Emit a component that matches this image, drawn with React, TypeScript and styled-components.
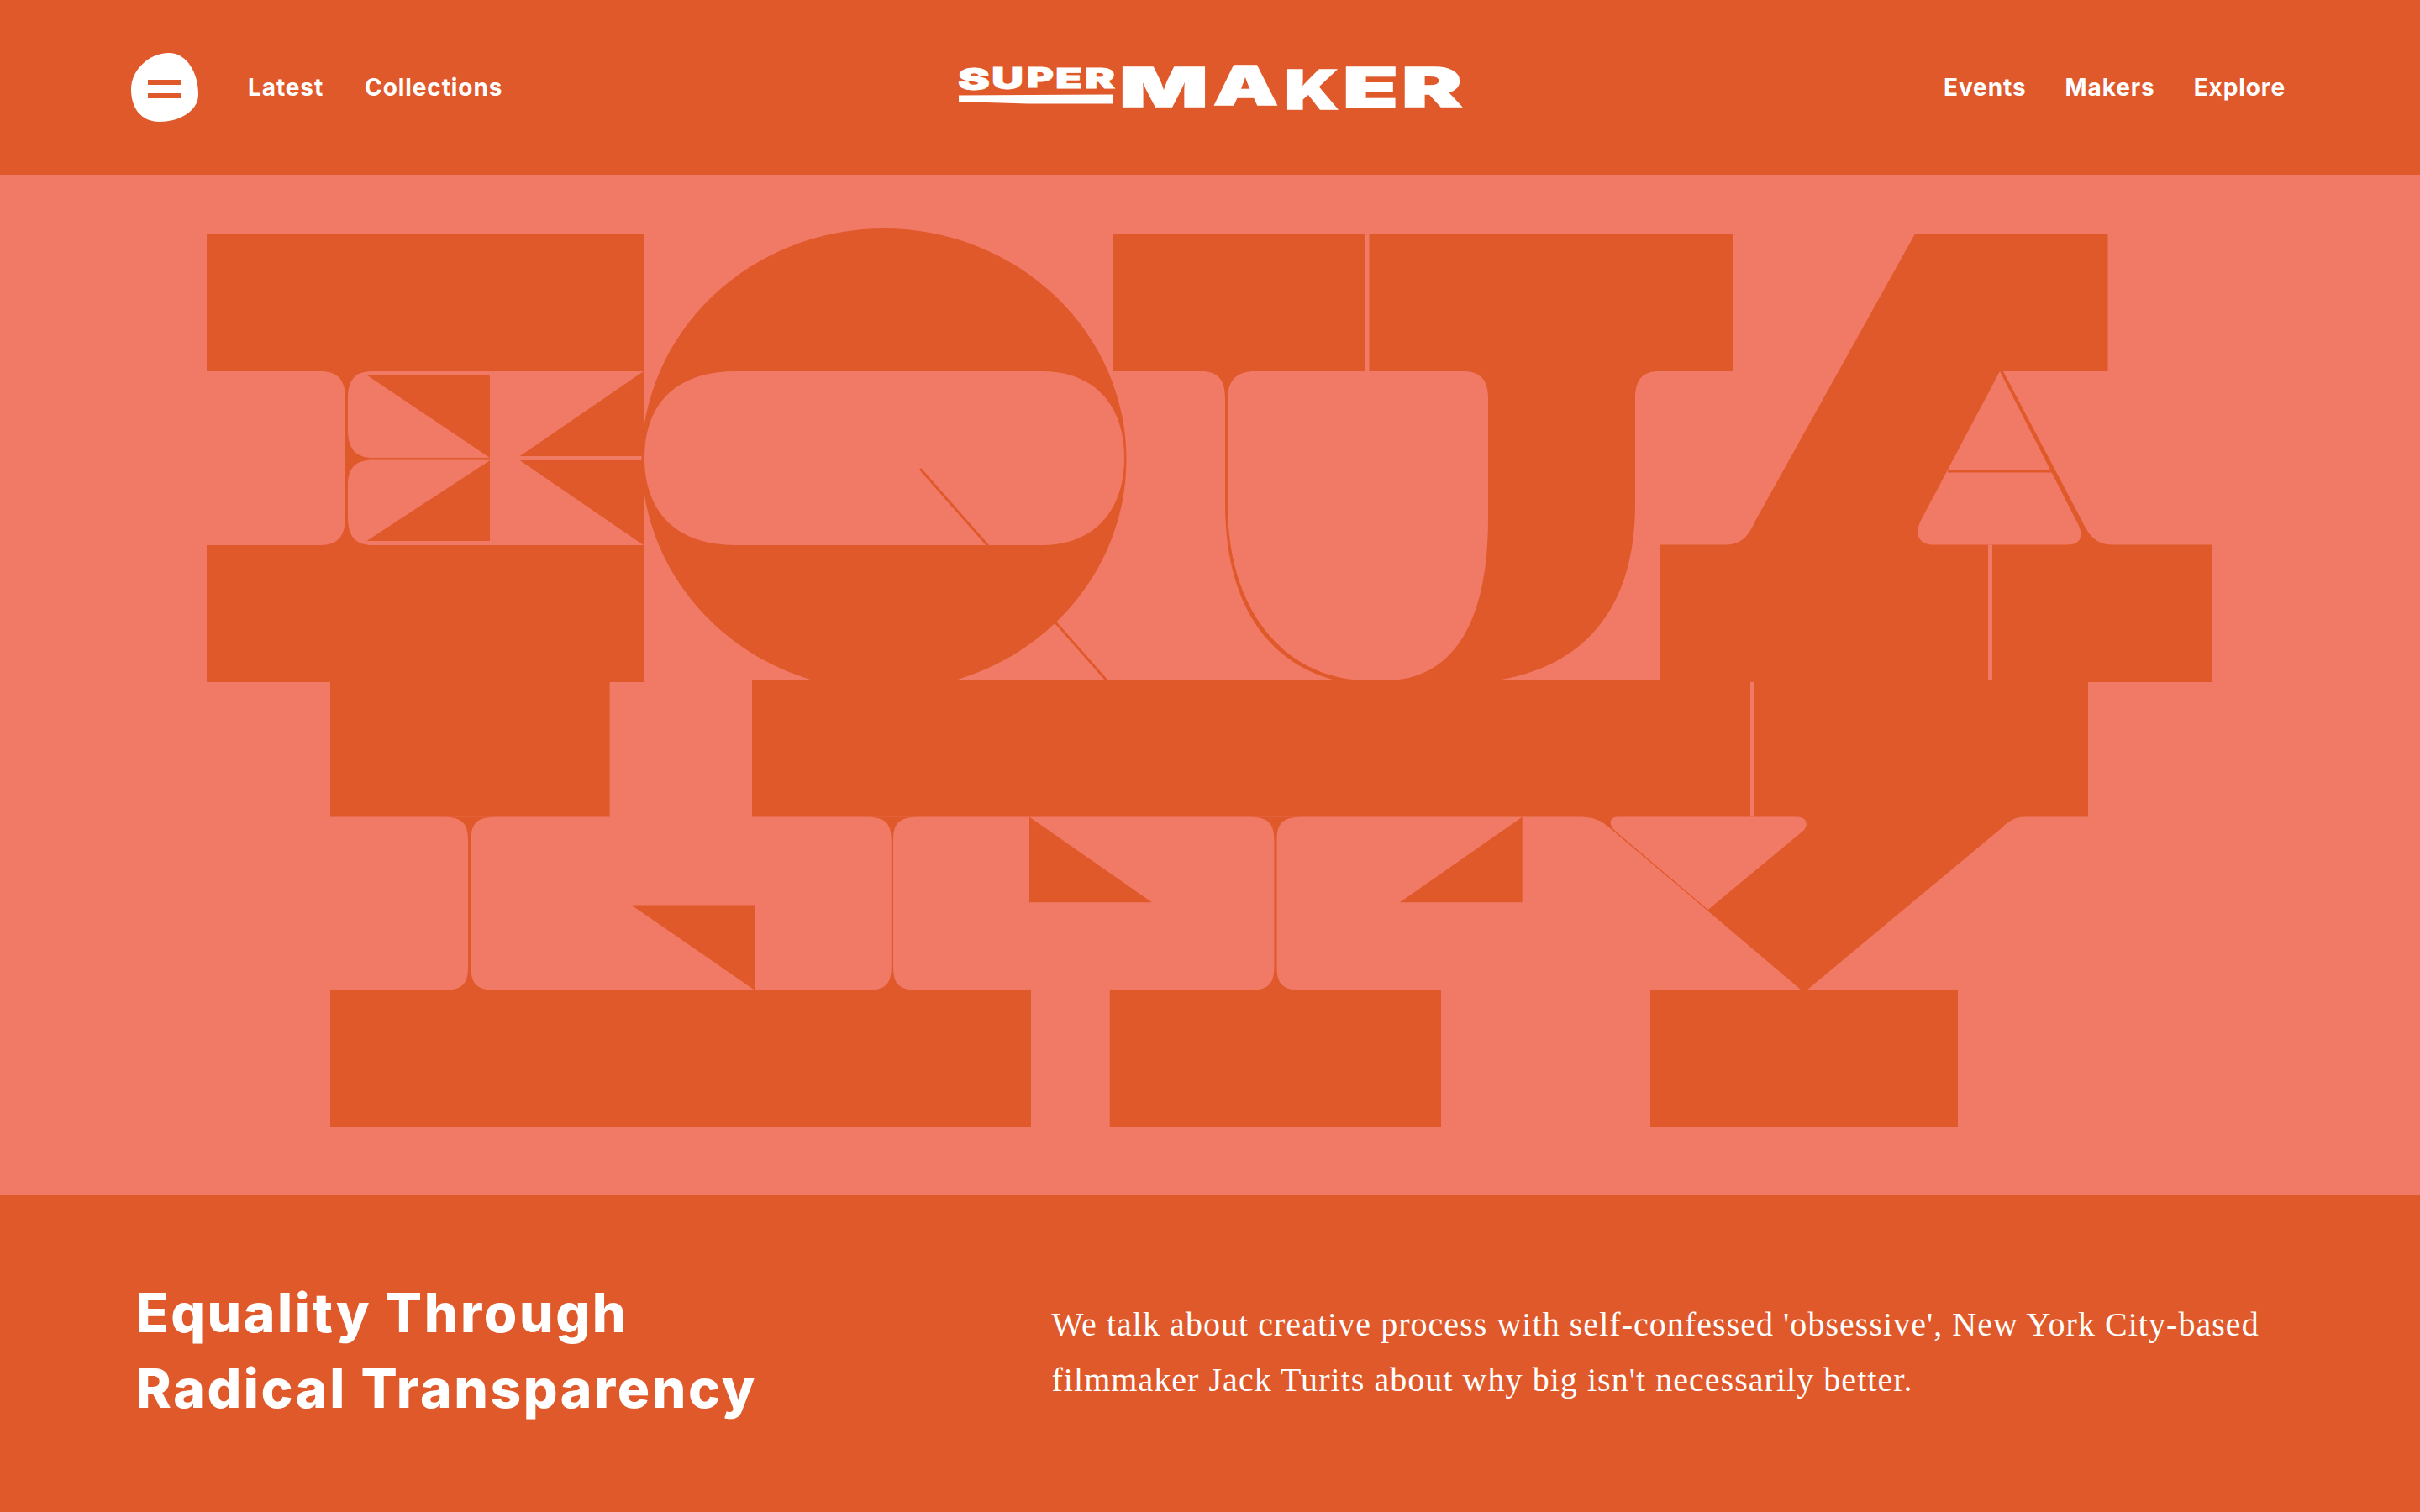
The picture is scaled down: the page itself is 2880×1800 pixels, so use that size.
import React from 'react';
import styled, { createGlobalStyle } from 'styled-components';

const DARK = '#e0592b';
const PINK = '#f17a66';

const GlobalStyle = createGlobalStyle`
  html, body {
    margin: 0;
    padding: 0;
    background: ${DARK};
  }
`;

const Page = styled.div`
  width: 2880px;
  height: 1800px;
  display: flex;
  flex-direction: column;
  background: ${DARK};
  color: #fff;
  overflow: hidden;
`;

const Header = styled.header`
  height: 208px;
  flex: none;
  display: grid;
  grid-template-columns: 1fr auto 1fr;
  align-items: center;
  padding: 0 160px 0 156px;
`;

const NavGroup = styled.nav<{ $end?: boolean }>`
  display: flex;
  align-items: center;
  justify-content: ${({ $end }) => ($end ? 'flex-end' : 'flex-start')};
  gap: ${({ $end }) => ($end ? '46px' : '49px')};
`;

const NavLink = styled.a`
  font-family: Inter, "Liberation Sans", sans-serif;
  font-size: 28px;
  font-weight: 700;
  line-height: 34px;
  letter-spacing: 0.9px;
  color: #fff;
  text-decoration: none;
`;

const MenuButton = styled.button`
  width: 80px;
  height: 82px;
  padding: 0;
  margin-right: 10px;
  border: 0;
  background: none;
  display: block;
`;

const Logo = styled.svg`
  display: block;
  width: 610px;
  height: 60px;
  margin-left: 3px;
  overflow: visible;
`;

const LogoLetter = styled.text`
  font-family: Inter, "Liberation Sans", sans-serif;
  font-weight: 900;
  fill: #fff;
  stroke: #fff;
`;

const Hero = styled.section`
  height: 1215px;
  flex: none;
  background: ${PINK};
`;

const Art = styled.svg`
  display: block;
  width: 2880px;
  height: 1215px;
`;

const Footer = styled.footer`
  flex: 1;
  display: grid;
  grid-template-columns: 1090px 1fr;
  padding: 0 160px 0 161.5px;
`;

const Title = styled.h1`
  margin: 95px 0 0;
  font-family: Inter, "Liberation Sans", sans-serif;
  font-size: 64px;
  font-weight: 800;
  line-height: 90px;
  letter-spacing: 2.6px;
  color: #fff;
`;

const Blurb = styled.p`
  margin: 121px 0 0;
  font-family: "Liberation Serif", serif;
  font-size: 40px;
  line-height: 66px;
  letter-spacing: 1.04px;
  color: #fff;
  white-space: nowrap;
`;

// corner-flared thin divider between two counters
const divider = (x1: number, x2: number, top: number, bottom: number) =>
  `M${x1 - 33} ${top} C${x1 - 8} ${top} ${x1} ${top + 6} ${x1} ${top + 28} V${bottom - 28} C${x1} ${bottom - 6} ${x1 - 8} ${bottom} ${x1 - 33} ${bottom} H${x2 + 33} C${x2 + 8} ${bottom} ${x2} ${bottom - 6} ${x2} ${bottom - 28} V${top + 28} C${x2} ${top + 6} ${x2 + 8} ${top} ${x2 + 33} ${top} Z`;

const superLetters = [
  { c: 'S', x: 1141, w: 38, y: 109, s: 36 },
  { c: 'U', x: 1181, w: 38, y: 108, s: 35 },
  { c: 'P', x: 1223, w: 32, y: 106, s: 33 },
  { c: 'E', x: 1257, w: 32, y: 107, s: 33 },
  { c: 'R', x: 1292, w: 36, y: 107, s: 33 },
];

const makerLetters = [
  { c: 'M', x: 1333, w: 106, y: 129, s: 65 },
  { c: 'A', x: 1445, w: 77, y: 127, s: 65 },
  { c: 'K', x: 1530, w: 64, y: 132, s: 65 },
  { c: 'E', x: 1599, w: 66, y: 130, s: 66 },
  { c: 'R', x: 1669, w: 72, y: 129, s: 65 },
];

export default function App() {
  return (
    <Page>
      <GlobalStyle />
      <Header>
        <NavGroup>
          <MenuButton aria-label="Menu">
            <svg width="80" height="82" viewBox="156 62 80 82">
              <path d="M201 62C222 62 236 85 236 112C236 130 215 144 190 144C168 144 156 128 156 105C156 82 178 62 201 62Z" fill="#fff" />
              <rect x="176" y="94" width="40" height="6" fill={DARK} />
              <rect x="176" y="110" width="40" height="6" fill={DARK} />
            </svg>
          </MenuButton>
          <NavLink>Latest</NavLink>
          <NavLink>Collections</NavLink>
        </NavGroup>
        <Logo viewBox="1136 76 610 60" role="img" aria-label="SuperMaker">
          {superLetters.map((l) => (
            <LogoLetter key={l.x} x={l.x} y={l.y} fontSize={l.s} textLength={l.w} lengthAdjust="spacingAndGlyphs" strokeWidth={0.8}>
              {l.c}
            </LogoLetter>
          ))}
          <path d="M1142 115.5L1325 114.5V125.5H1225L1142 123Z" fill="#fff" />
          {makerLetters.map((l) => (
            <LogoLetter key={l.x} x={l.x} y={l.y} fontSize={l.s} textLength={l.w} lengthAdjust="spacingAndGlyphs" strokeWidth={1.5}>
              {l.c}
            </LogoLetter>
          ))}
        </Logo>
        <NavGroup $end>
          <NavLink>Events</NavLink>
          <NavLink>Makers</NavLink>
          <NavLink>Explore</NavLink>
        </NavGroup>
      </Header>

      <Hero>
        <Art viewBox="0 208 2880 1215" role="img" aria-label="Equality">
          {/* E */}
          <rect x="246" y="279" width="520" height="533" fill={DARK} />
          <path d="M246 442H381C402 442 411 452 411 475V615C411 638 402 649 381 649H246Z" fill={PINK} />
          <path d="M444 442H766V649H444C424 649 414 640 414 615V578C414 556 424 547.5 444 547.5H583V545H444C424 545 414 535 414 512V475C414 450 424 442 444 442Z" fill={PINK} />
          <path d="M436.5 446.5H583V545Z" fill={DARK} />
          <path d="M436.5 644H583V548Z" fill={DARK} />
          <path d="M766 442L618.7 543H766Z" fill={DARK} />
          <path d="M766 649L618.7 548H766Z" fill={DARK} />

          {/* Q */}
          <ellipse cx="1052" cy="547" rx="288.5" ry="275" fill={DARK} />
          <path d="M876 442H1240C1300 442 1338 480 1338 545C1338 610 1300 649 1240 649H876C800 649 767 605 767 545C767 485 800 442 876 442Z" fill={PINK} />
          <path d="M1095 558L1317 810" stroke={DARK} strokeWidth="3" fill="none" />

          {/* U */}
          <path d="M1324 279H1625V442H1629.5V279H2063V442H1975C1954 442 1946 452 1946 475V600C1946 730 1880 795 1780 810H1590C1510 790 1458 720 1458 600V475C1458 452 1450 442 1429 442H1324Z" fill={DARK} />
          <path d="M1494 442H1741C1762 442 1771 452 1771 475V617C1771 740 1730 810 1648 810H1621C1530 805 1461 730 1461 600V475C1461 452 1472 442 1494 442Z" fill={PINK} />

          {/* A */}
          <path d="M2278.6 279H2508.5V442H2384L2477.7 620C2488 642 2498 648.6 2515.6 648.6H2632V812H2485V830H1976V648.6H2051C2072 648.6 2080 640 2089 620Z" fill={DARK} />
          <path d="M2380 442L2285.7 620C2278 637 2284 648.6 2301 648.6H2460C2477 648.6 2481 637 2471 620Z" fill={PINK} />
          <path d="M2318 560.7H2443" stroke={DARK} strokeWidth="3.5" fill="none" />
          <rect x="2366" y="648.6" width="5" height="161.4" fill={PINK} />

          {/* second row: L stem, long bar and V */}
          <rect x="393" y="812" width="332.6" height="160.5" fill={DARK} />
          <path d="M895 810H2485V972.5H2410C2395 972.5 2388 980 2380 987.5L2150 1179H2144L1915 985C1905 976 1895 972.5 1880 972.5H895Z" fill={DARK} />
          <path d="M1925 972.5H2139C2150 972.5 2153 982 2146 989L2032.7 1083L1922 989C1914 982 1915 972.5 1925 972.5Z" fill={PINK} />
          <rect x="2083" y="812" width="4.5" height="160.5" fill={PINK} />

          {/* dividers and wedges of the last row */}
          <path d={divider(557, 560.5, 972.5, 1179)} fill={DARK} />
          <path d={divider(1060.8, 1063, 972.5, 1179)} fill={DARK} />
          <path d={divider(1516.4, 1519.5, 972.5, 1179)} fill={DARK} />
          <path d="M751.4 1077.5H898.4V1179Z" fill={DARK} />
          <path d="M1225 972.5V1074.3H1371Z" fill={DARK} />
          <path d="M1811.7 972.5V1074.3H1665.8Z" fill={DARK} />

          <rect x="393" y="1179" width="834" height="163" fill={DARK} />
          <rect x="1320.7" y="1179" width="394.3" height="163" fill={DARK} />
          <rect x="1964" y="1179" width="366" height="163" fill={DARK} />
        </Art>
      </Hero>

      <Footer>
        <Title>
          Equality Through
          <br />
          Radical Transparency
        </Title>
        <Blurb>
          We talk about creative process with self-confessed 'obsessive', New York City-based
          <br />
          filmmaker Jack Turits about why big isn't necessarily better.
        </Blurb>
      </Footer>
    </Page>
  );
}
